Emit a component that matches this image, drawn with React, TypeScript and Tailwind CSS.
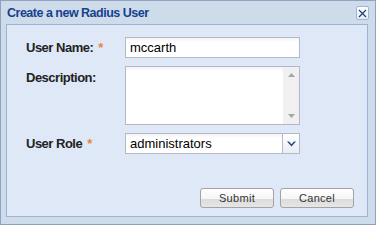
import React from 'react';

const font = { fontFamily: '"Liberation Sans", Arial, sans-serif' };

function Label({ text, required }: { text: string; required?: boolean }) {
    return (
        <div className="h-[21px] flex items-center text-[13px] font-bold text-[#222] tracking-[-0.5px]">
            {text}
            {required && <span className="ml-[5px] text-[#e8843f]">*</span>}
        </div>
    );
}

function Button({ children }: { children: React.ReactNode }) {
    return (
        <button className="w-[74px] h-[20px] rounded-[3px] border border-[#a3a3a3] bg-[linear-gradient(#ffffff_0%,#f6f6f6_55%,#dcdcdc_56%,#e6e6e6_100%)] text-[11px] text-[#333] tracking-[0.3px] flex items-center justify-center">
            {children}
        </button>
    );
}

export default function App() {
    return (
        <div style={font} className="w-[376px] h-[225px] border border-[#8fa2bf] bg-[#cedbeb] flex flex-col">
            {/* header */}
            <div className="h-[23px] flex items-center justify-between pl-[6px] pr-[6px]">
                <span className="text-[12.5px] font-bold text-[#15428b] tracking-[-0.5px] pt-[1px]">Create a new Radius User</span>
                <button className="w-[13px] h-[14px] mt-[1px] border border-[#9fb5d4] rounded-[2px] bg-[linear-gradient(#ffffff,#e4ecf7)] flex items-center justify-center">
                    <svg width="9" height="9" viewBox="0 0 9 9">
                        <path d="M1 1 L8 8 M8 1 L1 8" stroke="#1f3f78" strokeWidth="1.2" />
                    </svg>
                </button>
            </div>

            {/* body */}
            <div className="flex-1 ml-[5px] mr-[7px] mb-[7px] border border-[#9cb3d1] bg-[#dfe8f6] flex flex-col pt-[12px] pl-[19px] pr-[13px]">
                <div className="grid grid-cols-[99px_175px] gap-y-[8px]">
                    <Label text="User Name:" required />
                    <div className="h-[21px] border border-[#b5b8c8] bg-[linear-gradient(#f2f2f2,#ffffff_4px)] flex items-center px-[4px] text-[13px] text-black">
                        mccarth
                    </div>

                    <div className="pt-[1px]">
                        <Label text="Description:" />
                    </div>
                    <div className="h-[59px] border border-[#b5b8c8] bg-white flex">
                        <div className="flex-1 bg-[linear-gradient(#f2f2f2,#ffffff_4px)]" />
                        <div className="w-[16px] bg-[#f0f0f0] flex flex-col items-center justify-between py-[6px]">
                            <svg width="7" height="4" viewBox="0 0 7 4">
                                <path d="M0 4 L3.5 0 L7 4 Z" fill="#a5a5a5" />
                            </svg>
                            <svg width="7" height="4" viewBox="0 0 7 4">
                                <path d="M0 0 L3.5 4 L7 0 Z" fill="#a5a5a5" />
                            </svg>
                        </div>
                    </div>

                    <Label text="User Role" required />
                    <div className="h-[21px] flex">
                        <div className="flex-1 border border-[#b5b8c8] bg-[linear-gradient(#f2f2f2,#ffffff_4px)] flex items-center px-[4px] text-[13px] text-black">
                            administrators
                        </div>
                        <div className="w-[17px] border border-l-0 border-[#b5b8c8] bg-[linear-gradient(#ffffff,#e9eef5)] flex items-center justify-center">
                            <svg width="9" height="6" viewBox="0 0 9 6">
                                <path d="M0 0.5 L4.5 5.5 L9 0.5 L7 0.5 L4.5 3.2 L2 0.5 Z" fill="#24457f" />
                            </svg>
                        </div>
                    </div>
                </div>

                <div className="mt-[34px] flex justify-end gap-[6px]">
                    <Button>Submit</Button>
                    <Button>Cancel</Button>
                </div>
            </div>
        </div>
    );
}
